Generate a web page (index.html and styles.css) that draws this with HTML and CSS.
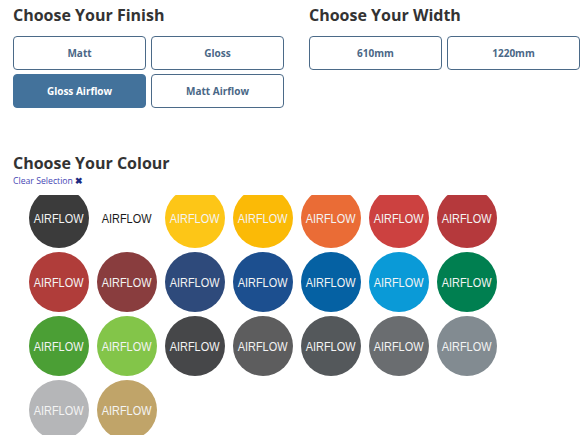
FILE: index.html
```html
<!DOCTYPE html>
<html>
<head>
<meta charset="utf-8">
<link rel="stylesheet" href="styles.css">
</head>
<body>
<div class="page">
  <div class="options">
    <section class="group">
      <h2 class="title">Choose Your Finish</h2>
      <div class="btns">
        <button class="btn">Matt</button>
        <button class="btn">Gloss</button>
        <button class="btn active">Gloss Airflow</button>
        <button class="btn">Matt Airflow</button>
      </div>
    </section>
    <section class="group">
      <h2 class="title">Choose Your Width</h2>
      <div class="btns">
        <button class="btn">610mm</button>
        <button class="btn">1220mm</button>
      </div>
    </section>
  </div>
  <section class="colour">
    <h2 class="title">Choose Your Colour</h2>
    <div class="clear">Clear Selection <span class="x">&#x2716;</span></div>
    <div class="swatch-window">
      <div class="swatches">
        <div class="sw" style="background:#3b3b3b"><span>AIRFLOW</span></div>
        <div class="sw white" style="background:#ffffff"><span>AIRFLOW</span></div>
        <div class="sw" style="background:#fdc617"><span>AIRFLOW</span></div>
        <div class="sw" style="background:#fbba06"><span>AIRFLOW</span></div>
        <div class="sw" style="background:#ea6c36"><span>AIRFLOW</span></div>
        <div class="sw" style="background:#cc4140"><span>AIRFLOW</span></div>
        <div class="sw" style="background:#b5393c"><span>AIRFLOW</span></div>
        <div class="sw" style="background:#b03d3a"><span>AIRFLOW</span></div>
        <div class="sw" style="background:#893d3e"><span>AIRFLOW</span></div>
        <div class="sw" style="background:#2e4a7b"><span>AIRFLOW</span></div>
        <div class="sw" style="background:#1c4f8f"><span>AIRFLOW</span></div>
        <div class="sw" style="background:#0561a3"><span>AIRFLOW</span></div>
        <div class="sw" style="background:#0a9ad7"><span>AIRFLOW</span></div>
        <div class="sw" style="background:#007f50"><span>AIRFLOW</span></div>
        <div class="sw" style="background:#4b9f35"><span>AIRFLOW</span></div>
        <div class="sw" style="background:#83c549"><span>AIRFLOW</span></div>
        <div class="sw" style="background:#464749"><span>AIRFLOW</span></div>
        <div class="sw" style="background:#5d5d5e"><span>AIRFLOW</span></div>
        <div class="sw" style="background:#54585b"><span>AIRFLOW</span></div>
        <div class="sw" style="background:#6a6d70"><span>AIRFLOW</span></div>
        <div class="sw" style="background:#828b91"><span>AIRFLOW</span></div>
        <div class="sw" style="background:#b5b6b8"><span>AIRFLOW</span></div>
        <div class="sw" style="background:#c0a469"><span>AIRFLOW</span></div>
      </div>
    </div>
  </section>
</div>
</body>
</html>
```
FILE: styles.css
```css
html, body {
  margin: 0;
  padding: 0;
  background: #ffffff;
}
.page {
  padding: 5px 0 0 13px;
  font-family: "Open Sans", "Liberation Sans", sans-serif;
}
.options {
  display: flex;
  gap: 24px;
}
.group {
  width: 272px;
}
.title {
  margin: 0 0 11px 0;
  font-size: 16px;
  line-height: 20px;
  font-weight: 700;
  color: #333333;
}
.btns {
  display: grid;
  grid-template-columns: 133px 133px;
  column-gap: 5px;
  row-gap: 4px;
}
.btn {
  height: 34px;
  margin: 0;
  padding: 0;
  border: 1px solid #4b6a88;
  border-radius: 4px;
  background: #ffffff;
  color: #4a6786;
  font-family: "Open Sans", "Liberation Sans", sans-serif;
  font-size: 10px;
  font-weight: 700;
}
.btn.active {
  background: #43729b;
  border-color: #43729b;
  color: #ffffff;
}
.colour {
  margin-top: 45px;
}
.colour .title {
  margin-bottom: 2px;
}
.clear {
  font-size: 8.7px;
  line-height: 12px;
  color: #4646b4;
}
.clear .x {
  color: #1b2a80;
  font-size: 9px;
  font-weight: 700;
}
.swatch-window {
  margin-top: 8px;
  height: 240px;
  overflow: hidden;
}
.swatches {
  margin: -7px 0 0 16px;
  width: 468px;
  display: flex;
  flex-wrap: wrap;
  column-gap: 8px;
  row-gap: 4px;
}
.sw {
  width: 60px;
  height: 60px;
  border-radius: 50%;
  display: flex;
  align-items: center;
  justify-content: center;
  font-family: "Liberation Sans", Arial, sans-serif;
  font-size: 13px;
  color: #f4f4f4;
}
.sw span {
  display: inline-block;
  transform: scaleX(0.84);
}
.sw.white {
  color: #1a1a1a;
}
```
